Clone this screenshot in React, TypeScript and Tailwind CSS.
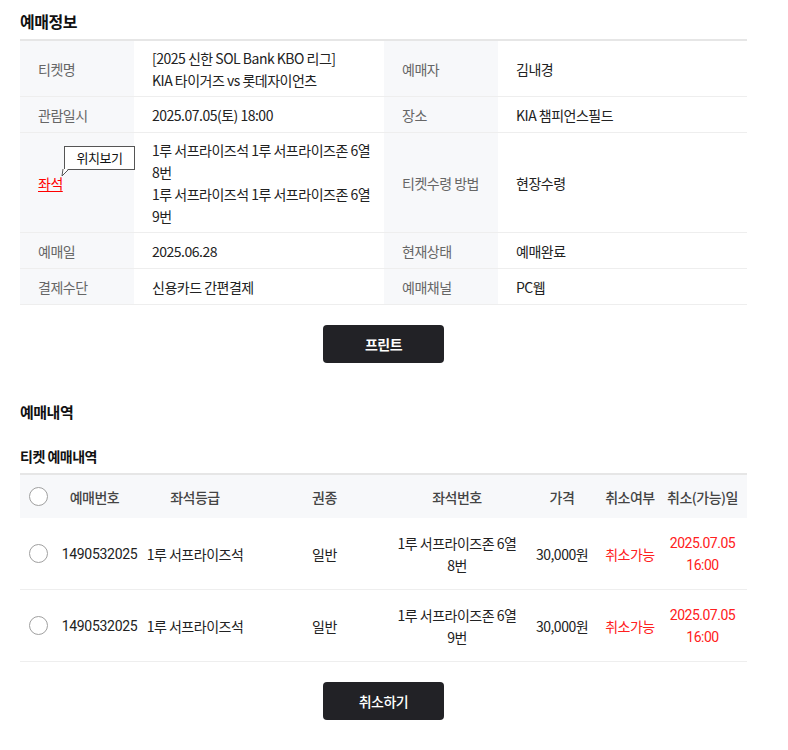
const font = "font-['Noto_Sans_CJK_KR','Noto_Sans',sans-serif]";

function Label({ children }: { children: React.ReactNode }) {
  return (
    <div className="flex w-[114px] shrink-0 items-center bg-[#f7f8fa] px-[18px] py-[5.5px] text-[#666]">
      {children}
    </div>
  );
}

function Value({ children, w }: { children: React.ReactNode; w: string }) {
  return (
    <div className={`flex ${w} shrink-0 items-center px-[18px] py-[5.5px] text-[#222]`}>
      <div className="whitespace-nowrap">{children}</div>
    </div>
  );
}

function Row({ children }: { children: React.ReactNode }) {
  return <div className="flex min-h-[36px] border-b border-[#eeeeee]">{children}</div>;
}

function Radio() {
  return <span className="block h-[19px] w-[19px] rounded-full border border-[#a0a0a0] bg-white" />;
}

const cols = "grid grid-cols-[36px_82px_114px_142px_126px_84px_52px_91px]";

const tickets = [
  { no: "1490532025", grade: "1루 서프라이즈석", type: "일반", seat: "8번" },
  { no: "1490532025", grade: "1루 서프라이즈석", type: "일반", seat: "9번" },
];

export default function App() {
  return (
    <div className={`${font} min-h-[750px] w-[788px] bg-white px-5 text-[14px] leading-[22px] tracking-[-0.5px]`}>
      <h2 className="pt-[10px] pb-[7px] text-[16px] font-bold text-[#111]">예매정보</h2>

      <div className="w-[727px] border-t-2 border-[#e6e6e6]">
        <Row>
          <Label>티켓명</Label>
          <Value w="w-[250px]">
            [2025 신한 SOL Bank KBO 리그]
            <br />
            KIA 타이거즈 vs 롯데자이언츠
          </Value>
          <Label>예매자</Label>
          <Value w="w-[249px]">김내경</Value>
        </Row>
        <Row>
          <Label>관람일시</Label>
          <Value w="w-[250px]">2025.07.05(토) 18:00</Value>
          <Label>장소</Label>
          <Value w="w-[249px]">KIA 챔피언스필드</Value>
        </Row>
        <Row>
          <Label>
            <span className="relative">
              <a className="text-[#ff0000] underline underline-offset-2">좌석</a>
              <span className="absolute left-[26px] top-[-26px] flex h-[24px] w-[71px] items-center justify-center whitespace-nowrap border border-[#555] bg-white text-[13px] text-[#111]">
                위치보기
              </span>
              <svg className="absolute left-[23px] top-[-4px]" width="8" height="9" viewBox="0 0 8 9">
                <path d="M1 1 L1 8 L7 1 Z" fill="white" />
                <path d="M2 1 L1 8 L7 2" fill="none" stroke="#555" strokeWidth="1" />
              </svg>
            </span>
          </Label>
          <Value w="w-[250px]">
            1루 서프라이즈석 1루 서프라이즈존 6열
            <br />
            8번
            <br />
            1루 서프라이즈석 1루 서프라이즈존 6열
            <br />
            9번
          </Value>
          <Label>티켓수령 방법</Label>
          <Value w="w-[249px]">현장수령</Value>
        </Row>
        <Row>
          <Label>예매일</Label>
          <Value w="w-[250px]">2025.06.28</Value>
          <Label>현재상태</Label>
          <Value w="w-[249px]">예매완료</Value>
        </Row>
        <Row>
          <Label>결제수단</Label>
          <Value w="w-[250px]">신용카드 간편결제</Value>
          <Label>예매채널</Label>
          <Value w="w-[249px]">PC웹</Value>
        </Row>
      </div>

      <div className="flex w-[727px] justify-center pt-[20px]">
        <button className="h-[38px] w-[121px] rounded-[4px] bg-[#222226] text-[14px] font-bold text-white">
          프린트
        </button>
      </div>

      <h2 className="pt-[38px] text-[15px] font-bold text-[#111]">예매내역</h2>
      <h3 className="pt-[22px] pb-[6px] text-[14px] font-bold text-[#111]">티켓 예매내역</h3>

      <div className="w-[727px] border-t-2 border-[#e6e6e6]">
        <div className={`${cols} h-[43px] items-center bg-[#f7f8fa] text-center font-medium text-[#444]`}>
          <div className="flex justify-center">
            <Radio />
          </div>
          <div className="pr-[5px]">예매번호</div>
          <div>좌석등급</div>
          <div className="pl-[3px]">권종</div>
          <div>좌석번호</div>
          <div>가격</div>
          <div>취소여부</div>
          <div className="whitespace-nowrap pl-[2px]">취소(가능)일</div>
        </div>
        {tickets.map((t, i) => (
          <div key={i} className={`${cols} h-[72px] items-center border-b border-[#eeeeee] text-center text-[#222]`}>
            <div className="flex justify-center">
              <Radio />
            </div>
            <div className="pl-[5px] font-['Roboto',sans-serif] tracking-[-0.3px]">{t.no}</div>
            <div className="whitespace-nowrap">{t.grade}</div>
            <div className="pl-[3px]">{t.type}</div>
            <div className="whitespace-nowrap">
              1루 서프라이즈존 6열
              <br />
              {t.seat}
            </div>
            <div>30,000원</div>
            <div className="whitespace-nowrap text-[#ff2020]">취소가능</div>
            <div className="pl-[2px] font-['Roboto',sans-serif] text-[#ff2020]">
              2025.07.05
              <br />
              16:00
            </div>
          </div>
        ))}
      </div>

      <div className="flex w-[727px] justify-center pt-[20px]">
        <button className="h-[38px] w-[121px] rounded-[4px] bg-[#222226] text-[14px] font-medium text-white">
          취소하기
        </button>
      </div>
    </div>
  );
}
